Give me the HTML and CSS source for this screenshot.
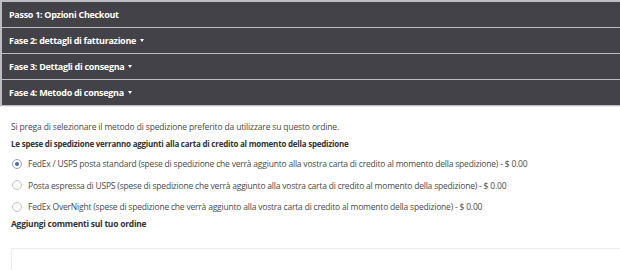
FILE: index.html
```html
<!DOCTYPE html>
<html lang="it">
<head>
<meta charset="utf-8">
<link rel="stylesheet" href="styles.css">
</head>
<body>
<div class="steps">
  <div class="step">Passo 1: Opzioni Checkout</div>
  <div class="step">Fase 2: dettagli di fatturazione <span class="caret"></span></div>
  <div class="step">Fase 3: Dettagli di consegna <span class="caret"></span></div>
  <div class="step">Fase 4: Metodo di consegna <span class="caret"></span></div>
</div>
<div class="panel">
  <p class="intro">Si prega di selezionare il metodo di spedizione preferito da utilizzare su questo ordine.</p>
  <p class="strong notice">Le spese di spedizione verranno aggiunti alla carta di credito al momento della spedizione</p>
  <label class="opt"><span class="radio checked"></span>FedEx / USPS posta standard (spese di spedizione che verrà aggiunto alla vostra carta di credito al momento della spedizione) - $ 0.00</label>
  <label class="opt"><span class="radio"></span>Posta espressa di USPS (spese di spedizione che verrà aggiunto alla vostra carta di credito al momento della spedizione) - $ 0.00</label>
  <label class="opt"><span class="radio"></span>FedEx OverNight (spese di spedizione che verrà aggiunto alla vostra carta di credito al momento della spedizione) - $ 0.00</label>
  <p class="strong comments">Aggiungi commenti sul tuo ordine</p>
  <div class="textarea"></div>
</div>
</body>
</html>
```
FILE: styles.css
```css
* { box-sizing: border-box; }
body {
  margin: 0;
  background: #fff;
  font-family: "Open Sans", "Noto Sans", sans-serif;
  color: #4a4a4a;
  overflow: hidden;
  height: 270px;
}
.steps {
  display: flex;
  flex-direction: column;
  gap: 1px;
  padding: 2px 0 1px 2px;
  background: #bdbcc0;
}
.step {
  height: 25px;
  display: flex;
  align-items: center;
  padding-left: 7px;
  padding-bottom: 1px;
  background: #434249;
  color: #fff;
  font-weight: 700;
  font-size: 9px;
  letter-spacing: -0.3px;
}
.caret {
  display: inline-block;
  margin-left: 4px;
  width: 0;
  height: 0;
  border-left: 2.5px solid transparent;
  border-right: 2.5px solid transparent;
  border-top: 3px solid #fff;
}
.panel {
  padding: 14px 0 0 11px;
  border-top: 1px solid #ececec;
  font-size: 8.5px;
  letter-spacing: -0.15px;
}
.panel p { margin: 0; }
.intro { height: 17px; line-height: 12px; }
.strong {
  font-weight: 700;
  color: #333;
  line-height: 12px;
}
.notice {
  height: 15px;
  font-size: 8px;
  letter-spacing: -0.23px;
}
.opt {
  display: flex;
  align-items: center;
  height: 21.5px;
  padding-left: 1px;
  letter-spacing: -0.2px;
}
.radio {
  width: 10px;
  height: 10px;
  border-radius: 50%;
  border: 1px solid #c6c6c6;
  background: #fafafa;
  margin-right: 6px;
  flex: none;
  display: flex;
  align-items: center;
  justify-content: center;
}
.radio.checked { border-color: #9aa4b4; }
.radio.checked::after {
  content: "";
  width: 4px;
  height: 4px;
  border-radius: 50%;
  background: #4a6da8;
}
.comments {
  margin-top: 4px;
  height: 20px;
  font-size: 8.5px;
  letter-spacing: -0.25px;
}
.textarea {
  margin-top: 10px;
  height: 40px;
  border: 1px solid #ececec;
  border-right: none;
  border-radius: 2px 0 0 0;
}
```
